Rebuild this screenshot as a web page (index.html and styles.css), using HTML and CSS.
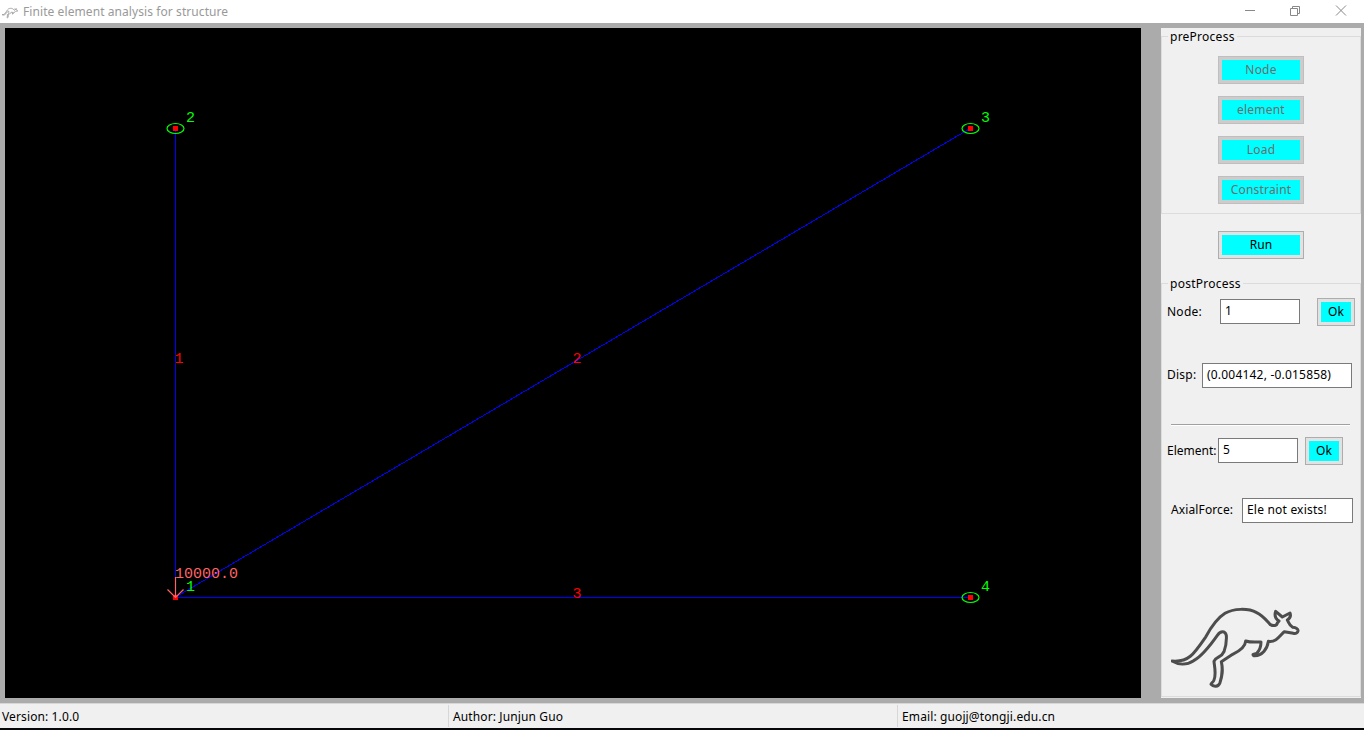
FILE: index.html
```html
<!DOCTYPE html>
<html lang="en">
<head>
<meta charset="utf-8">
<title>Finite element analysis for structure</title>
<link rel="stylesheet" href="styles.css">
</head>
<body>
<svg class="defs" width="0" height="0" aria-hidden="true">
  <symbol id="kangaroo" viewBox="63 30 390 255">
    <path d="M66 198C115 202 130 180 167 126C185 93 204 68 225 55C250 40 295 39 320 53C340 63 350 77 361 89C370 94 381 92 382 84L387 78C374 70 373 61 377 49L397 66L420 54C424 64 421 69 412 75C417 84 418 91 428 97C438 98 445 101 444 108C443 113 438 117 430 115L403 110C390 121 380 142 355 139C352 161 337 184 311 182C306 177 311 178 320 175C331 164 333 154 333 141C315 141 302 143 287 138C286 157 269 168 248 178L214 200C220 227 216 243 210 263C205 277 190 276 183 268C183 263 190 263 192 255C200 235 192 209 192 199C198 184 214 189 222 170C229 151 230 137 229 121C225 107 212 107 202 121C183 148 156 183 131 197C108 212 83 208 66 198Z"/>
  </symbol>
</svg>
<div class="window">
  <header class="titlebar">
    <svg class="app-icon"><use href="#kangaroo"/></svg>
    <span class="title">Finite element analysis for structure</span>
    <svg class="controls" viewBox="0 0 102 12">
      <path d="M0 5.500h10M45.500 3.500h7v7h-7zM47.500 3.500v-2h7v7h-2M91 .5l10 10M101 .5l-10 10"/>
    </svg>
  </header>
  <main class="workspace">
    <svg class="canvas" viewBox="5 28 1136 670">
      <g class="members">
        <path d="M175.500 128V597M175.500 597.500H970M175 597.500L970 128.500"/>
      </g>
      <g class="nodes">
        <path d="M173 126h5v5h-5zM968 126h5v5h-5zM968 595h5v5h-5zM173 595h5v5h-5z"/>
      </g>
      <g class="supports">
        <ellipse cx="175.500" cy="128.500" rx="8.500" ry="5"/>
        <ellipse cx="970.500" cy="128.500" rx="8.500" ry="5"/>
        <ellipse cx="970.500" cy="597.500" rx="8.500" ry="5"/>
      </g>
      <path class="load" d="M175.500 577V597M167.500 589.500l8 8l8-8"/>
      <g class="node-text">
        <text x="186" y="122">2</text>
        <text x="981" y="122">3</text>
        <text x="981" y="591">4</text>
        <text x="186" y="591">1</text>
      </g>
      <g class="element-text">
        <text x="174.500" y="363">1</text>
        <text x="572.500" y="363">2</text>
        <text x="572.500" y="598">3</text>
      </g>
      <text class="load-text" x="175" y="578" textLength="63">10000.0</text>
    </svg>
    <aside class="panel">
      <section class="group pre">
        <h2 class="caption">preProcess</h2>
        <button class="button" disabled>Node</button>
        <button class="button" disabled>element</button>
        <button class="button" disabled>Load</button>
        <button class="button" disabled>Constraint</button>
      </section>
      <div class="run-row"><button class="button">Run</button></div>
      <section class="group post">
        <h2 class="caption">postProcess</h2>
        <div class="row node-row"><span class="label">Node:</span><div class="field">1</div><button class="button ok">Ok</button></div>
        <div class="row disp-row"><span class="label">Disp:</span><div class="field">(0.004142, -0.015858)</div></div>
        <div class="separator"></div>
        <div class="row element-row"><span class="label">Element:</span><div class="field">5</div><button class="button ok">Ok</button></div>
        <div class="row force-row"><span class="label">AxialForce:</span><div class="field">Ele not exists!</div></div>
        <svg class="logo"><use href="#kangaroo"/></svg>
      </section>
    </aside>
  </main>
  <footer class="statusbar">
    <span class="status version">Version: 1.0.0</span>
    <span class="status author">Author: Junjun Guo</span>
    <span class="status email">Email: guojj@tongji.edu.cn</span>
  </footer>
</div>
</body>
</html>
```
FILE: styles.css
```css
* { box-sizing: border-box; }
body { margin: 0; background: #05070a; font: 12px/16px "Noto Sans", "Open Sans", sans-serif; letter-spacing: .12px; color: #000; }
.defs { position: absolute; }
.window { width: 1364px; height: 728px; display: flex; flex-direction: column; background: #ababab; overflow: hidden; }
.titlebar { height: 23px; background: #fff; display: flex; align-items: center; padding: 0 17px 0 2px; color: #999; }
.app-icon { width: 16px; height: 12px; margin: 3px 5px 0 0; fill: none; stroke: #777; stroke-width: 15; }
.title { font-size: 12px; letter-spacing: .08px; }
.controls { width: 102px; height: 12px; margin: -2px 0 0 auto; fill: none; stroke: #888; stroke-width: 1; }
.workspace { height: 680px; padding: 5px 3px 5px 5px; display: flex; justify-content: space-between; }
.canvas { width: 1136px; height: 670px; background: #000; font: 15px "Liberation Mono", monospace; letter-spacing: 0; }
.members { stroke: #00f; stroke-width: 1; shape-rendering: crispEdges; }
.nodes { fill: #f00; shape-rendering: crispEdges; }
.supports { fill: none; stroke: #0f0; stroke-width: 1.2; }
.load { fill: none; stroke: #ff6464; stroke-width: 1.2; }
.node-text { fill: #0f0; }
.element-text { fill: #f00; }
.load-text { fill: #ff6464; }
.panel { width: 200px; height: 670px; background: #f0f0f0; padding-top: 8px; }
.group { border: 1px solid #dcdcdc; display: flex; flex-direction: column; }
.caption { margin: -8px 0 0 6px; padding: 0 2px; height: 16px; align-self: flex-start; background: #f0f0f0; font-size: 12px; font-weight: 400; line-height: 16px; letter-spacing: .25px; }
.pre { height: 178px; align-items: center; gap: 12px; }
.pre .caption { margin-bottom: -1px; }
.button { width: 86px; height: 28px; flex: none; border: 1px solid #adadad; padding: 3px; background: linear-gradient(#0ff, #0ff) content-box, #e1e1e1; font: 12px/18px "Noto Sans", "Open Sans", sans-serif; letter-spacing: .15px; color: #000; text-align: center; }
.button:disabled { border-color: #bfbfbf; background: linear-gradient(#0ff, #0ff) content-box, #ccc; color: #6d6d6d; letter-spacing: .2px; }
.run-row { height: 69px; padding-top: 17px; display: flex; justify-content: center; }
.post { height: 414px; }
.row { display: flex; height: 28px; flex: none; align-items: center; padding-left: 5px; }
.label { flex: none; white-space: nowrap; letter-spacing: .25px; }
.field { height: 25px; align-self: flex-start; margin-top: 1px; border: 1px solid #7a7a7a; background: #fff; padding: 3px 4px; line-height: 17px; letter-spacing: .2px; white-space: nowrap; }
.ok { width: 38px; }
.node-row { margin-top: 6px; }
.node-row .label { width: 53px; }
.node-row .field { width: 80px; margin-right: 17px; padding-top: 2px; }
.disp-row { margin-top: 35px; }
.disp-row .label { width: 35px; }
.disp-row .field { width: 150px; margin-top: 2px; padding-top: 2px; }
.separator { height: 2px; width: 179px; flex: none; margin: 35px 0 0 9px; border-top: 1px solid #a0a0a0; background: #fff; }
.element-row { margin-top: 11px; }
.element-row .label { width: 51px; letter-spacing: 0; }
.element-row .field { width: 80px; margin-right: 7px; padding-top: 1px; margin-top: 1px; }
.force-row { margin-top: 31px; padding-left: 9px; }
.force-row .label { width: 71px; letter-spacing: .12px; }
.force-row .field { width: 111px; margin-top: 2px; padding-top: 2px; }
.element-row .field { padding-top: 2px; }
.logo { width: 130px; height: 85px; margin: 81px 0 0 9px; fill: none; stroke: #4d4d4d; stroke-width: 9; stroke-linejoin: round; flex: none; }
.statusbar { height: 25px; display: flex; background: #f0f0f0; border-top: 1px solid #d7d7d7; padding-top: 1px; }
.status { height: 22px; padding: 3px 4px; line-height: 17px; border-left: 1px solid #d7d7d7; }
.version { width: 448px; padding-left: 2px; border: 0; }
.author { width: 449px; }
.email { flex: 1; }
```
